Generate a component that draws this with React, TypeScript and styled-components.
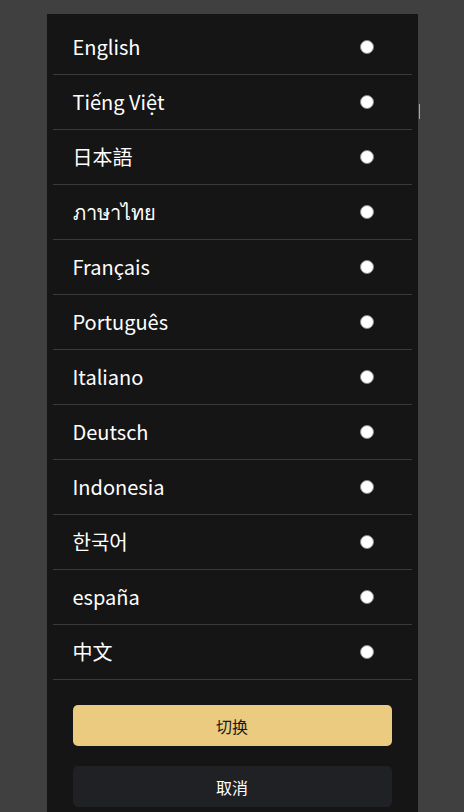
import { useState } from 'react';
import { createGlobalStyle, styled } from 'styled-components';

const languages = [
  'English',
  'Tiếng Việt',
  '日本語',
  'ภาษาไทย',
  'Français',
  'Português',
  'Italiano',
  'Deutsch',
  'Indonesia',
  '한국어',
  'españa',
  '中文',
];

const GlobalStyle = createGlobalStyle`
  html, body {
    margin: 0;
    height: 100%;
    background: #404040;
    overflow: hidden;
  }
  body {
    font-family: "Noto Sans CJK SC", "Noto Sans", sans-serif;
  }
`;

const App = () => {
  const [selected, setSelected] = useState<string | null>(null);

  return (
    <>
      <GlobalStyle />
      <Page>
        <Panel>
          <List>
            {languages.map((lang) => (
              <Row key={lang} onClick={() => setSelected(lang)}>
                <Label>{lang}</Label>
                <Radio $checked={selected === lang} />
              </Row>
            ))}
          </List>
          <Actions>
            <Button $primary>切换</Button>
            <Button>取消</Button>
          </Actions>
        </Panel>
        <Caret />
      </Page>
    </>
  );
};

const Page = styled.div`
  position: relative;
  height: 100vh;
  padding-top: 14px;
  box-sizing: border-box;
`;

const Panel = styled.div`
  width: 371px;
  min-height: 100%;
  margin: 0 auto;
  padding-top: 6px;
  background: #151515;
  box-sizing: border-box;
`;

const List = styled.div`
  display: flex;
  flex-direction: column;
  padding: 0 6px;
`;

const Row = styled.div`
  display: flex;
  align-items: center;
  justify-content: space-between;
  height: 55px;
  padding: 0 38px 0 20px;
  border-bottom: 1px solid #3a3a3a;
  box-sizing: border-box;
  cursor: pointer;
`;

const Label = styled.span`
  color: #ffffff;
  font-size: 20px;
  line-height: 1;
`;

const Radio = styled.span<{ $checked: boolean }>`
  width: 14px;
  height: 14px;
  border-radius: 50%;
  background: #ffffff;
  box-shadow: 0 0 0 ${(p) => (p.$checked ? '4px' : '0')} #ebcb7f inset;
  border: 1px solid #8a8a8a;
  box-sizing: border-box;
`;

const Actions = styled.div`
  display: flex;
  flex-direction: column;
  gap: 20px;
  padding: 25px 26px 0;
`;

const Button = styled.button<{ $primary?: boolean }>`
  height: 41px;
  border: none;
  border-radius: 5px;
  font-family: "Noto Sans CJK SC", sans-serif;
  font-size: 16px;
  background: ${(p) => (p.$primary ? '#ebcb7f' : '#202125')};
  color: ${(p) => (p.$primary ? '#1a1a1a' : '#ffffff')};
  cursor: pointer;
`;

const Caret = styled.span`
  position: absolute;
  left: 419px;
  top: 104px;
  width: 1px;
  height: 15px;
  background: #c9a94c;
`;

export default App;
